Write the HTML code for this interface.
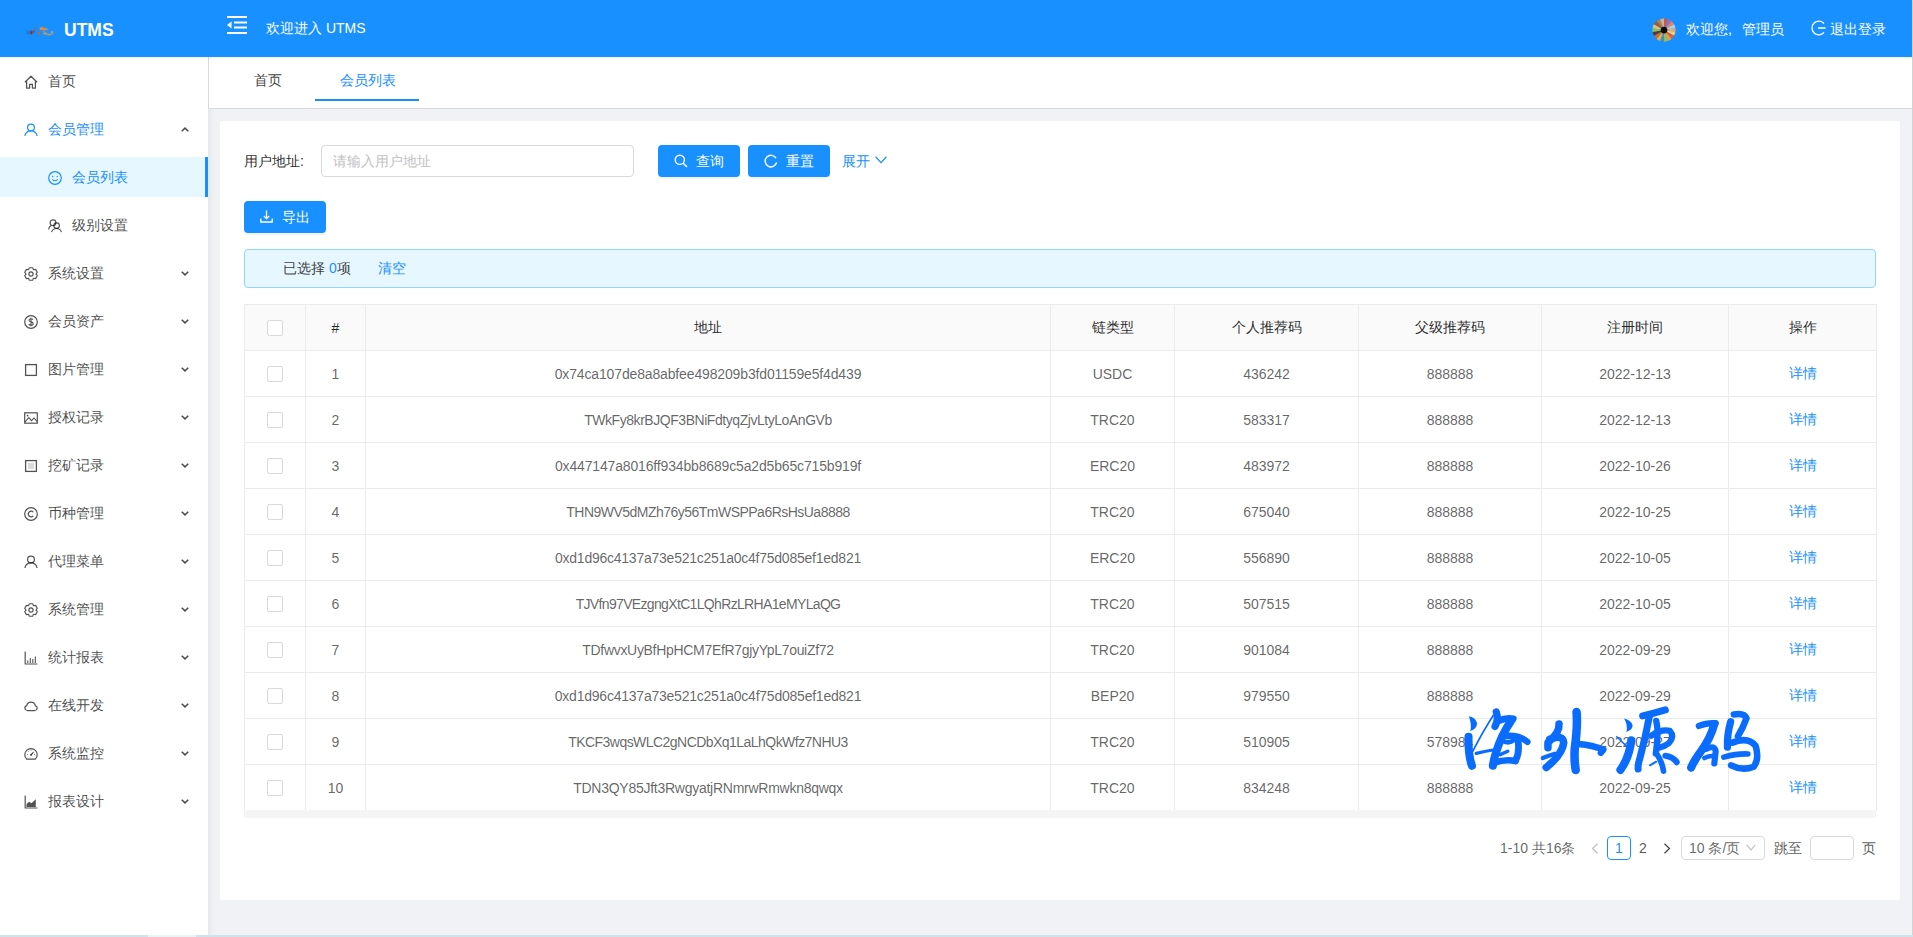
<!DOCTYPE html>
<html><head><meta charset="utf-8">
<style>
*{box-sizing:border-box;margin:0;padding:0}
html,body{width:1913px;height:937px;overflow:hidden;background:#f0f2f5;font-family:"Liberation Sans",sans-serif;font-size:14px;color:rgba(0,0,0,.85)}
.abs{position:absolute}
#header{position:absolute;left:0;top:0;width:1912px;height:57px;background:#1890ff;color:#fff;z-index:2;box-shadow:0 1px 3px rgba(0,21,41,.08)}
#rightline{position:absolute;left:1912px;top:0;width:1px;height:937px;background:#d3d3d3}
#sider{position:absolute;left:0;top:57px;width:208px;height:880px;background:#fff;box-shadow:2px 0 6px rgba(0,21,41,.06)}
.mi{position:absolute;left:0;width:208px;height:40px;line-height:40px;color:rgba(0,0,0,.72)}
.mi .ic{position:absolute;left:24px;top:14px;width:14px;height:14px;color:rgba(0,0,0,.68)}
.mi .tx{position:absolute;left:48px;top:0}
.mi .ar{position:absolute;left:181px;top:18px;width:8px;height:5px;color:rgba(0,0,0,.7)}
.mi.sub .ic{left:48px}
.mi.sub .tx{left:72px}
.mi.open,.mi.open .ic{color:#1890ff}
.mi.open .ar{color:rgba(0,0,0,.7)}
.mi.sel{background:#e6f7ff;color:#1890ff;width:208px}
.mi.sel .ic{color:#1890ff}
.mi .bar{position:absolute;left:205px;top:0;width:3px;height:40px;background:#1890ff}
#tabs{position:absolute;left:208px;top:57px;width:1704px;height:52px;background:#fff;border-bottom:1px solid #d9d9d9;border-left:1px solid #d9d9d9}
#card{position:absolute;left:220px;top:121px;width:1680px;height:779px;background:#fff;border-radius:2px}
.btn{position:absolute;height:32px;background:#1890ff;color:#fff;border-radius:4px;box-shadow:0 2px 0 rgba(0,0,0,.045)}
.btn .tx{position:absolute;top:0;line-height:32px}
table{border-collapse:collapse;table-layout:fixed}
#tbl{position:absolute;left:244px;top:304px;width:1632px}
#tbl td,#tbl th{border:1px solid #ebebeb;height:46px;text-align:center;font-weight:normal;color:rgba(0,0,0,.62);padding:0}
#tbl th{background:#fafafa;color:rgba(0,0,0,.85)}
.cb{display:inline-block;width:16px;height:16px;border:1px solid #d9d9d9;border-radius:2px;background:#fff;vertical-align:middle}
.lnk{color:#1890ff}
</style></head>
<body>
<div id="header">
  <svg class="abs" style="left:22px;top:20px" width="36" height="22" viewBox="0 0 1533 937">
    <defs><filter id="lb" x="-50%" y="-50%" width="200%" height="200%"><feGaussianBlur stdDeviation="10"/></filter></defs>
    <g filter="url(#lb)">
    <ellipse cx="320" cy="530" rx="140" ry="80" fill="#3a5a9a" opacity=".5"/>
    <ellipse cx="405" cy="535" rx="40" ry="78" fill="#8a2020"/>
    <ellipse cx="505" cy="490" rx="42" ry="70" fill="#b03a30" transform="rotate(-15 505 490)"/>
    <ellipse cx="575" cy="365" rx="35" ry="25" fill="#b04a40"/>
    <ellipse cx="740" cy="565" rx="40" ry="85" fill="#e45a28"/>
    <path d="M750 320 Q850 285 960 335 Q1080 370 1120 400 L1090 430 L760 425 Z" fill="#f08a30"/>
    <rect x="910" y="540" width="150" height="75" rx="32" fill="#f0a040"/>
    <rect x="1060" y="590" width="180" height="55" rx="25" fill="#e8a040"/>
    <rect x="1240" y="460" width="75" height="145" rx="32" fill="#e8a040"/>
    <rect x="890" y="470" width="90" height="36" rx="16" fill="#e0a050"/>
    </g>
  </svg>
  <div class="abs" style="left:64px;top:19px;font-size:17.5px;font-weight:bold;line-height:22px">UTMS</div>
  <svg class="abs" style="left:227px;top:16px" width="20" height="18" viewBox="0 0 20 18">
    <rect x="0" y="0" width="20" height="2" fill="#fff"/>
    <rect x="7" y="5.5" width="13" height="2" fill="#fff"/>
    <rect x="7" y="10.5" width="13" height="2" fill="#fff"/>
    <rect x="0" y="16" width="20" height="2" fill="#fff"/>
    <path d="M0 9 L4.5 5.5 L4.5 12.5 Z" fill="#fff"/>
  </svg>
  <div class="abs" style="left:266px;top:19px;line-height:18px">欢迎进入 UTMS</div>
  <svg class="abs" style="left:1652px;top:18px" width="24" height="24" viewBox="0 0 32 32"><defs><clipPath id="avc"><circle cx="16" cy="16" r="15.5"/></clipPath><filter id="avb"><feGaussianBlur stdDeviation="0.6"/></filter></defs><g clip-path="url(#avc)"><g filter="url(#avb)"><path d="M16 16 L16.00 0.00 A16 16 0 0 1 21.47 0.96 Z" fill="#c85a4a"/><path d="M16 16 L21.47 0.96 A16 16 0 0 1 26.28 3.74 Z" fill="#9a6fb0"/><path d="M16 16 L26.28 3.74 A16 16 0 0 1 29.86 8.00 Z" fill="#e8806a"/><path d="M16 16 L29.86 8.00 A16 16 0 0 1 31.76 13.22 Z" fill="#a8d0e0"/><path d="M16 16 L31.76 13.22 A16 16 0 0 1 31.76 18.78 Z" fill="#e8a878"/><path d="M16 16 L31.76 18.78 A16 16 0 0 1 29.86 24.00 Z" fill="#f0d070"/><path d="M16 16 L29.86 24.00 A16 16 0 0 1 26.28 28.26 Z" fill="#e05a3a"/><path d="M16 16 L26.28 28.26 A16 16 0 0 1 21.47 31.04 Z" fill="#e8a040"/><path d="M16 16 L21.47 31.04 A16 16 0 0 1 16.00 32.00 Z" fill="#90c060"/><path d="M16 16 L16.00 32.00 A16 16 0 0 1 10.53 31.04 Z" fill="#4a90b0"/><path d="M16 16 L10.53 31.04 A16 16 0 0 1 5.72 28.26 Z" fill="#e0b040"/><path d="M16 16 L5.72 28.26 A16 16 0 0 1 2.14 24.00 Z" fill="#c07040"/><path d="M16 16 L2.14 24.00 A16 16 0 0 1 0.24 18.78 Z" fill="#5a3a2a"/><path d="M16 16 L0.24 18.78 A16 16 0 0 1 0.24 13.22 Z" fill="#90c050"/><path d="M16 16 L0.24 13.22 A16 16 0 0 1 2.14 8.00 Z" fill="#e0c080"/><path d="M16 16 L2.14 8.00 A16 16 0 0 1 5.72 3.74 Z" fill="#a05a30"/><path d="M16 16 L5.72 3.74 A16 16 0 0 1 10.53 0.96 Z" fill="#b08040"/><path d="M16 16 L10.53 0.96 A16 16 0 0 1 16.00 0.00 Z" fill="#d0b0a0"/><circle cx="16" cy="16" r="4.5" fill="#111"/></g></g></svg>
  <div class="abs" style="left:1686px;top:20px;line-height:18px">欢迎您<span style="display:inline-block;width:14px">,</span>管理员</div>
  <svg class="abs" style="left:1811px;top:20px" width="16" height="16" viewBox="0 0 16 16"><path d="M13.01 3.63 A6.8 6.8 0 1 0 13.01 12.37" fill="none" stroke="#fff" stroke-width="1.3"/><path d="M7.6 8 H14.2" stroke="#fff" stroke-width="1.4" stroke-linecap="round"/></svg>
  <div class="abs" style="left:1830px;top:20px;line-height:18px">退出登录</div>
</div>
<div id="rightline"></div>

<div id="sider">
<svg width="0" height="0" style="position:absolute">
<defs>
<symbol id="i-home" viewBox="0 0 14 14"><path d="M0.9 7.3 L7 1.2 L13.1 7.3 M2.6 5.8 V13 H5.6 V9.3 H8.4 V13 H11.4 V5.8" fill="none" stroke="currentColor" stroke-width="1.25" stroke-linejoin="round"/></symbol>
<symbol id="i-user" viewBox="0 0 14 14"><circle cx="7" cy="4.4" r="3.4" fill="none" stroke="currentColor" stroke-width="1.25"/><path d="M0.9 13 A6.2 6.2 0 0 1 13.1 13" fill="none" stroke="currentColor" stroke-width="1.25"/></symbol>
<symbol id="i-smile" viewBox="0 0 14 14"><circle cx="7" cy="7" r="6.3" fill="none" stroke="currentColor" stroke-width="1.2"/><circle cx="4.7" cy="5.6" r="0.75" fill="currentColor"/><circle cx="9.3" cy="5.6" r="0.75" fill="currentColor"/><path d="M4.3 8.3 Q7 11.2 9.7 8.3" fill="none" stroke="currentColor" stroke-width="1.1"/></symbol>
<symbol id="i-team" viewBox="0 0 14 14"><circle cx="5" cy="3.8" r="2.9" fill="none" stroke="currentColor" stroke-width="1.15"/><circle cx="8.6" cy="6.6" r="2.8" fill="none" stroke="currentColor" stroke-width="1.15"/><path d="M0.6 10.5 A4.8 4.8 0 0 1 3.2 6.6 M3.6 13.2 A5.1 5.1 0 0 1 13.4 13.2" fill="none" stroke="currentColor" stroke-width="1.15"/></symbol>
<symbol id="i-setting" viewBox="0 0 14 14"><path d="M5.33 0.72 L8.67 0.72 L9.40 2.61 L9.60 2.73 L11.60 2.41 L13.28 5.31 L12.00 6.88 L12.00 7.12 L13.28 8.69 L11.60 11.59 L9.60 11.27 L9.40 11.39 L8.67 13.28 L5.33 13.28 L4.60 11.39 L4.40 11.27 L2.40 11.59 L0.72 8.69 L2.00 7.12 L2.00 6.88 L0.72 5.31 L2.40 2.41 L4.40 2.73 L4.60 2.61Z" fill="none" stroke="currentColor" stroke-width="1.15" stroke-linejoin="round"/><circle cx="7" cy="7" r="2.1" fill="none" stroke="currentColor" stroke-width="1.15"/></symbol>
<symbol id="i-dollar" viewBox="0 0 14 14"><circle cx="7" cy="7" r="6.3" fill="none" stroke="currentColor" stroke-width="1.2"/><path d="M9 4.8 Q8.6 3.8 7 3.8 Q5 3.8 5 5.3 Q5 6.5 7 6.9 Q9.2 7.3 9.2 8.7 Q9.2 10.2 7 10.2 Q5.2 10.2 4.8 9 M7 2.7 V11.3" fill="none" stroke="currentColor" stroke-width="1.1"/></symbol>
<symbol id="i-square" viewBox="0 0 14 14"><rect x="1.6" y="1.6" width="10.8" height="10.8" fill="none" stroke="currentColor" stroke-width="1.3"/></symbol>
<symbol id="i-picture" viewBox="0 0 14 14"><rect x="0.7" y="1.8" width="12.6" height="10.4" fill="none" stroke="currentColor" stroke-width="1.2"/><circle cx="3.6" cy="4.6" r="0.9" fill="currentColor"/><path d="M1 11 L4.8 6.6 L7.5 9.6 L10 7 L13 10.4" fill="none" stroke="currentColor" stroke-width="1.1"/></symbol>
<symbol id="i-profile" viewBox="0 0 14 14"><rect x="1.6" y="1.6" width="10.8" height="10.8" fill="none" stroke="currentColor" stroke-width="1.3"/><path d="M4 5 H10 M4 7 H10 M4 9 H10" stroke="currentColor" stroke-width="0.7" opacity=".6"/></symbol>
<symbol id="i-copyright" viewBox="0 0 14 14"><circle cx="7" cy="7" r="6.3" fill="none" stroke="currentColor" stroke-width="1.2"/><path d="M9.2 5.2 A2.8 2.8 0 1 0 9.2 8.8" fill="none" stroke="currentColor" stroke-width="1.3"/></symbol>
<symbol id="i-barchart" viewBox="0 0 14 14"><path d="M1.2 0.5 V13 H13.5" fill="none" stroke="currentColor" stroke-width="1.2"/><path d="M3.8 12 V9.5 M6.3 12 V7 M8.8 12 V8 M11.3 12 V5.5" stroke="currentColor" stroke-width="1.1"/></symbol>
<symbol id="i-cloud" viewBox="0 0 14 14"><path d="M3.2 11.5 H10.8 A2.5 2.5 0 0 0 11.3 6.6 A4.4 4.4 0 0 0 2.7 6.6 A2.5 2.5 0 0 0 3.2 11.5 Z" fill="none" stroke="currentColor" stroke-width="1.25"/></symbol>
<symbol id="i-dashboard" viewBox="0 0 14 14"><path d="M2.6 12.2 A6.2 6.2 0 1 1 11.4 12.2 Z" fill="none" stroke="currentColor" stroke-width="1.2" stroke-linejoin="round"/><path d="M7 8 L9.5 5.2" stroke="currentColor" stroke-width="1.2"/><circle cx="7" cy="8" r="0.9" fill="currentColor"/><path d="M3 7.5 H3.8 M10.2 7.5 H11 M4.2 4.2 L4.7 4.7 M7 2.8 V3.6" stroke="currentColor" stroke-width="0.9"/></symbol>
<symbol id="i-areachart" viewBox="0 0 14 14"><path d="M1.2 0.5 V13 H13.5" fill="none" stroke="currentColor" stroke-width="1.2"/><path d="M2.5 12 V9 L5.2 6.8 L7.5 8.3 L11.8 4.2 V12 Z" fill="currentColor"/></symbol>
<symbol id="i-down" viewBox="0 0 8 5"><path d="M0.7 0.7 L4 3.9 L7.3 0.7" fill="none" stroke="currentColor" stroke-width="1.5"/></symbol>
<symbol id="i-up" viewBox="0 0 8 5"><path d="M0.7 4.3 L4 1.1 L7.3 4.3" fill="none" stroke="currentColor" stroke-width="1.5"/></symbol>
</defs></svg>
  <div class="mi" style="top:4px"><svg class="ic"><use href="#i-home"/></svg><span class="tx">首页</span></div>
  <div class="mi open" style="top:52px"><svg class="ic"><use href="#i-user"/></svg><span class="tx">会员管理</span><svg class="ar"><use href="#i-up"/></svg></div>
  <div class="mi sub sel" style="top:100px"><svg class="ic"><use href="#i-smile"/></svg><span class="tx">会员列表</span><div class="bar"></div></div>
  <div class="mi sub" style="top:148px"><svg class="ic"><use href="#i-team"/></svg><span class="tx">级别设置</span></div>
  <div class="mi" style="top:196px"><svg class="ic"><use href="#i-setting"/></svg><span class="tx">系统设置</span><svg class="ar"><use href="#i-down"/></svg></div>
  <div class="mi" style="top:244px"><svg class="ic"><use href="#i-dollar"/></svg><span class="tx">会员资产</span><svg class="ar"><use href="#i-down"/></svg></div>
  <div class="mi" style="top:292px"><svg class="ic"><use href="#i-square"/></svg><span class="tx">图片管理</span><svg class="ar"><use href="#i-down"/></svg></div>
  <div class="mi" style="top:340px"><svg class="ic"><use href="#i-picture"/></svg><span class="tx">授权记录</span><svg class="ar"><use href="#i-down"/></svg></div>
  <div class="mi" style="top:388px"><svg class="ic"><use href="#i-profile"/></svg><span class="tx">挖矿记录</span><svg class="ar"><use href="#i-down"/></svg></div>
  <div class="mi" style="top:436px"><svg class="ic"><use href="#i-copyright"/></svg><span class="tx">币种管理</span><svg class="ar"><use href="#i-down"/></svg></div>
  <div class="mi" style="top:484px"><svg class="ic"><use href="#i-user"/></svg><span class="tx">代理菜单</span><svg class="ar"><use href="#i-down"/></svg></div>
  <div class="mi" style="top:532px"><svg class="ic"><use href="#i-setting"/></svg><span class="tx">系统管理</span><svg class="ar"><use href="#i-down"/></svg></div>
  <div class="mi" style="top:580px"><svg class="ic"><use href="#i-barchart"/></svg><span class="tx">统计报表</span><svg class="ar"><use href="#i-down"/></svg></div>
  <div class="mi" style="top:628px"><svg class="ic"><use href="#i-cloud"/></svg><span class="tx">在线开发</span><svg class="ar"><use href="#i-down"/></svg></div>
  <div class="mi" style="top:676px"><svg class="ic"><use href="#i-dashboard"/></svg><span class="tx">系统监控</span><svg class="ar"><use href="#i-down"/></svg></div>
  <div class="mi" style="top:724px"><svg class="ic"><use href="#i-areachart"/></svg><span class="tx">报表设计</span><svg class="ar"><use href="#i-down"/></svg></div>
</div>

<div id="tabs">
  <div class="abs" style="left:45px;top:14px;line-height:18px;color:rgba(0,0,0,.78)">首页</div>
  <div class="abs" style="left:131px;top:14px;line-height:18px;color:#1890ff">会员列表</div>
  <div class="abs" style="left:106px;top:42px;width:104px;height:2px;background:#1890ff"></div>
</div>

<div id="card"></div>
<div class="abs" style="left:244px;top:152px;line-height:18px;color:rgba(0,0,0,.85)">用户地址:</div>
<div class="abs" style="left:321px;top:145px;width:313px;height:32px;border:1px solid #d9d9d9;border-radius:4px;background:#fff"></div>
<div class="abs" style="left:333px;top:152px;line-height:18px;color:#bfbfbf">请输入用户地址</div>
<div class="btn" style="left:658px;top:145px;width:82px">
  <svg class="abs" style="left:16px;top:9px" width="14" height="14" viewBox="0 0 14 14"><circle cx="5.8" cy="5.8" r="4.6" fill="none" stroke="#fff" stroke-width="1.4"/><path d="M9.2 9.2 L13 13" stroke="#fff" stroke-width="1.5"/></svg>
  <span class="tx" style="left:38px">查询</span>
</div>
<div class="btn" style="left:748px;top:145px;width:82px">
  <svg class="abs" style="left:16px;top:9px" width="14" height="14" viewBox="0 0 14 14"><path d="M12 4.2 A5.8 5.8 0 1 0 12.6 8.5" fill="none" stroke="#fff" stroke-width="1.4"/><path d="M12.8 1.2 V5 H9" fill="none" stroke="#fff" stroke-width="0"/></svg>
  <span class="tx" style="left:38px">重置</span>
</div>
<div class="abs" style="left:842px;top:152px;line-height:18px;color:#1890ff">展开</div>
<svg class="abs" style="left:875px;top:156px" width="12" height="8" viewBox="0 0 12 8"><path d="M0.6 0.8 L6 6.6 L11.4 0.8" fill="none" stroke="#1890ff" stroke-width="1.3"/></svg>
<div class="btn" style="left:244px;top:201px;width:82px">
  <svg class="abs" style="left:16px;top:9px" width="13" height="13" viewBox="0 0 13 13"><path d="M6.5 0.5 V8.5 M3.8 6 L6.5 8.7 L9.2 6 M0.8 8.5 V12 H12.2 V8.5" fill="none" stroke="#fff" stroke-width="1.3"/></svg>
  <span class="tx" style="left:38px">导出</span>
</div>
<div class="abs" style="left:244px;top:249px;width:1632px;height:39px;background:#e6f7ff;border:1px solid #91d5ff;border-radius:4px"></div>
<div class="abs" style="left:283px;top:259px;line-height:18px;color:rgba(0,0,0,.78)">已选择 <span style="color:#1890ff">0</span>项</div>
<div class="abs" style="left:378px;top:259px;line-height:18px;color:#1890ff">清空</div>
<table id="tbl">
<colgroup><col style="width:61px"><col style="width:60px"><col style="width:685px"><col style="width:124px"><col style="width:184px"><col style="width:183px"><col style="width:187px"><col style="width:148px"></colgroup>
<thead><tr><th><span class="cb"></span></th><th>#</th><th>地址</th><th>链类型</th><th>个人推荐码</th><th>父级推荐码</th><th>注册时间</th><th>操作</th></tr></thead>
<tbody>
<tr><td><span class="cb"></span></td><td>1</td><td><span class="addr" style="letter-spacing:-0.146px">0x74ca107de8a8abfee498209b3fd01159e5f4d439</span></td><td>USDC</td><td>436242</td><td>888888</td><td>2022-12-13</td><td><span class="lnk">详情</span></td></tr>
<tr><td><span class="cb"></span></td><td>2</td><td><span class="addr" style="letter-spacing:-0.45px">TWkFy8krBJQF3BNiFdtyqZjvLtyLoAnGVb</span></td><td>TRC20</td><td>583317</td><td>888888</td><td>2022-12-13</td><td><span class="lnk">详情</span></td></tr>
<tr><td><span class="cb"></span></td><td>3</td><td><span class="addr" style="letter-spacing:-0.156px">0x447147a8016ff934bb8689c5a2d5b65c715b919f</span></td><td>ERC20</td><td>483972</td><td>888888</td><td>2022-10-26</td><td><span class="lnk">详情</span></td></tr>
<tr><td><span class="cb"></span></td><td>4</td><td><span class="addr" style="letter-spacing:-0.52px">THN9WV5dMZh76y56TmWSPPa6RsHsUa8888</span></td><td>TRC20</td><td>675040</td><td>888888</td><td>2022-10-25</td><td><span class="lnk">详情</span></td></tr>
<tr><td><span class="cb"></span></td><td>5</td><td><span class="addr" style="letter-spacing:-0.24px">0xd1d96c4137a73e521c251a0c4f75d085ef1ed821</span></td><td>ERC20</td><td>556890</td><td>888888</td><td>2022-10-05</td><td><span class="lnk">详情</span></td></tr>
<tr><td><span class="cb"></span></td><td>6</td><td><span class="addr" style="letter-spacing:-0.66px">TJVfn97VEzgngXtC1LQhRzLRHA1eMYLaQG</span></td><td>TRC20</td><td>507515</td><td>888888</td><td>2022-10-05</td><td><span class="lnk">详情</span></td></tr>
<tr><td><span class="cb"></span></td><td>7</td><td><span class="addr" style="letter-spacing:-0.31px">TDfwvxUyBfHpHCM7EfR7gjyYpL7ouiZf72</span></td><td>TRC20</td><td>901084</td><td>888888</td><td>2022-09-29</td><td><span class="lnk">详情</span></td></tr>
<tr><td><span class="cb"></span></td><td>8</td><td><span class="addr" style="letter-spacing:-0.23px">0xd1d96c4137a73e521c251a0c4f75d085ef1ed821</span></td><td>BEP20</td><td>979550</td><td>888888</td><td>2022-09-29</td><td><span class="lnk">详情</span></td></tr>
<tr><td><span class="cb"></span></td><td>9</td><td><span class="addr" style="letter-spacing:-0.54px">TKCF3wqsWLC2gNCDbXq1LaLhQkWfz7NHU3</span></td><td>TRC20</td><td>510905</td><td>578984</td><td>2022-09-27</td><td><span class="lnk">详情</span></td></tr>
<tr><td><span class="cb"></span></td><td>10</td><td><span class="addr" style="letter-spacing:-0.26px">TDN3QY85Jft3RwgyatjRNmrwRmwkn8qwqx</span></td><td>TRC20</td><td>834248</td><td>888888</td><td>2022-09-25</td><td><span class="lnk">详情</span></td></tr>
</tbody></table>
<div class="abs" style="left:244px;top:810px;width:1632px;height:8px;background:#f5f5f5"></div>


<div class="abs" style="left:1500px;top:839px;line-height:18px;color:rgba(0,0,0,.62)">1-10 共16条</div>
<svg class="abs" style="left:1591px;top:843px" width="8" height="11" viewBox="0 0 8 11"><path d="M6.5 0.8 L1.5 5.5 L6.5 10.2" fill="none" stroke="#bfbfbf" stroke-width="1.2"/></svg>
<div class="abs" style="left:1607px;top:836px;width:24px;height:24px;border:1px solid #1890ff;border-radius:4px;line-height:22px;text-align:center;color:#1890ff">1</div>
<div class="abs" style="left:1631px;top:836px;width:24px;height:24px;line-height:24px;text-align:center;color:rgba(0,0,0,.68)">2</div>
<svg class="abs" style="left:1663px;top:843px" width="8" height="11" viewBox="0 0 8 11"><path d="M1.5 0.8 L6.5 5.5 L1.5 10.2" fill="none" stroke="rgba(0,0,0,.75)" stroke-width="1.2"/></svg>
<div class="abs" style="left:1681px;top:836px;width:84px;height:24px;border:1px solid #d9d9d9;border-radius:4px;background:#fff"></div>
<div class="abs" style="left:1689px;top:839px;line-height:18px;color:rgba(0,0,0,.62)">10 条/页</div>
<svg class="abs" style="left:1746px;top:844px" width="10" height="7" viewBox="0 0 10 7"><path d="M0.6 0.8 L5 5.8 L9.4 0.8" fill="none" stroke="#bfbfbf" stroke-width="1.1"/></svg>
<div class="abs" style="left:1774px;top:839px;line-height:18px;color:rgba(0,0,0,.68)">跳至</div>
<div class="abs" style="left:1810px;top:836px;width:44px;height:24px;border:1px solid #d9d9d9;border-radius:4px;background:#fff"></div>
<div class="abs" style="left:1862px;top:839px;line-height:18px;color:rgba(0,0,0,.68)">页</div>
<div class="abs" style="left:0;top:935px;width:1913px;height:2px;background:#cfe3ec"></div>
<div class="abs" style="left:148px;top:935px;width:48px;height:2px;background:#eaf4f7"></div>
<!--wm-->
<svg class="abs" style="left:1460px;top:700px" width="150" height="80" viewBox="0 0 1757 937"><g fill="none" stroke="#0a6cff" stroke-linecap="round" stroke-linejoin="round"><path d="M105 190 Q180 200 200 270 Q200 340 120 362 Q140 300 105 190 Z" fill="#0a6cff" stroke="none"/><path d="M100 430 Q95 650 140 770" stroke-width="95"/><path d="M150 600 Q260 380 415 140" stroke-width="20"/><path d="M425 140 Q455 220 410 310" stroke-width="85"/><path d="M440 250 Q540 200 625 220" stroke-width="78"/><path d="M600 240 Q480 420 420 620 Q395 700 385 770" stroke-width="95"/><path d="M545 420 Q700 410 790 490" stroke-width="75"/><path d="M680 480 Q700 620 650 710" stroke-width="80"/><path d="M400 735 Q530 690 650 715" stroke-width="78"/><path d="M190 625 Q300 600 420 580" stroke-width="38"/><path d="M490 470 Q560 520 630 470" stroke-width="55"/><path d="M470 640 L560 600" stroke-width="40"/><path d="M1160 280 Q1170 380 1030 500 L1030 560" stroke-width="88"/><path d="M1050 460 Q1210 400 1215 500 Q1200 640 1010 790" stroke-width="88"/><path d="M970 680 Q1040 650 1110 630" stroke-width="50"/><path d="M1365 140 Q1380 300 1345 560 Q1335 700 1355 820" stroke-width="100"/><path d="M1390 515 Q1550 530 1680 580 L1650 620" stroke-width="75"/></g></svg>
<svg class="abs" style="left:1610px;top:700px" width="160" height="85" viewBox="0 0 1764 937"><g fill="none" stroke="#0a6cff" stroke-linecap="round" stroke-linejoin="round"><path d="M155 205 Q230 220 250 280 Q245 330 180 352 Q200 280 155 205 Z" fill="#0a6cff" stroke="none"/><path d="M75 405 Q140 470 185 510" stroke-width="18"/><path d="M235 445 Q210 640 115 770" stroke-width="90"/><path d="M360 175 Q480 150 610 110" stroke-width="78"/><path d="M435 175 Q390 420 330 640 Q305 720 310 760" stroke-width="78"/><path d="M510 230 Q540 350 505 590" stroke-width="70"/><path d="M455 395 Q560 320 660 340 Q715 400 650 475 Q600 515 540 525" stroke-width="68"/><path d="M525 610 Q580 700 590 785" stroke-width="62"/><path d="M610 615 Q700 630 735 685" stroke-width="68"/><path d="M440 720 L510 680" stroke-width="22"/><path d="M980 285 Q1060 250 1165 255" stroke-width="70"/><path d="M1150 265 Q1110 420 1000 570 Q920 680 895 745" stroke-width="90"/><path d="M1060 540 Q1160 490 1165 570 L1150 700" stroke-width="68"/><path d="M1040 640 Q1100 610 1150 620" stroke-width="50"/><path d="M1365 160 Q1480 140 1505 200 Q1470 300 1410 400" stroke-width="72"/><path d="M1330 240 Q1290 380 1295 520" stroke-width="80"/><path d="M1350 470 Q1520 400 1605 505 Q1650 650 1585 735 Q1460 785 1335 720" stroke-width="72"/><path d="M1255 630 Q1400 590 1520 595" stroke-width="62"/></g></svg>
</body></html>
